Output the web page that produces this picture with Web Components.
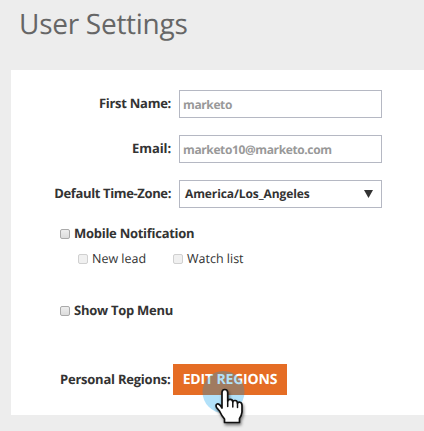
<!DOCTYPE html>
<html lang="en"><head><meta charset="utf-8"><title>User Settings</title>
<style>
html,body{margin:0;height:431px;overflow:hidden;background:#ededed}
body{font-family:"Open Sans","Noto Sans",sans-serif;font-size:13px;color:#333;text-rendering:geometricPrecision}
</style></head><body>
<settings-page heading="User Settings">
  <field-row label="First Name:" style="--track:-.27px"><text-box value="marketo"></text-box></field-row>
  <field-row label="Email:" style="--track:-.1px"><text-box value="marketo10@marketo.com"></text-box></field-row>
  <field-row label="Default Time-Zone:" style="--track:-.37px"><select-box value="America/Los_Angeles"></select-box></field-row>
  <check-group>
    <check-item strong>Mobile Notification</check-item>
    <div slot="children"><check-item muted>New lead</check-item></div>
    <div slot="children"><check-item muted>Watch list</check-item></div>
  </check-group>
  <check-group><check-item strong>Show Top Menu</check-item></check-group>
  <region-row label="Personal Regions:"><action-button>EDIT REGIONS</action-button></region-row>
</settings-page>
<click-pointer></click-pointer>
<script>
class Base extends HTMLElement{
  connectedCallback(){
    if(this.shadowRoot)return;
    this.attachShadow({mode:'open'}).innerHTML=this.render();
  }
  a(n){return this.getAttribute(n)||''}
}
customElements.define('settings-page',class extends Base{render(){return `
<style>
:host{display:flex;flex-direction:column;height:431px}
h1{margin:0;height:70px;box-sizing:border-box;padding:5px 0 0 19px;font-size:28px;line-height:38px;font-weight:400;letter-spacing:-.27px;color:#666;white-space:nowrap}
section{margin-left:11px;height:345px;box-sizing:border-box;padding-top:20px;background:#fff}
</style><h1>${this.a('heading')}</h1><section><slot></slot></section>`}});
customElements.define('field-row',class extends Base{render(){return `
<style>
:host{display:grid;grid-template-columns:160px 203px;column-gap:8px;height:28px;margin-bottom:17px}
label{text-align:right;font-weight:700;line-height:27px;letter-spacing:var(--track,0);white-space:nowrap}
</style><label>${this.a('label')}</label><slot></slot>`}});
const boxCss=`:host{display:flex;box-sizing:border-box;height:28px;border:1px solid #b5b8c3;background:#fff;line-height:28px;font-weight:700;font-size:12px;white-space:nowrap}`;
customElements.define('text-box',class extends Base{render(){return `
<style>${boxCss} :host{padding-left:3px;color:#999;letter-spacing:-.38px}</style><span>${this.a('value')}</span>`}});
customElements.define('select-box',class extends Base{render(){return `
<style>${boxCss} :host{padding:0 8px 0 5px;justify-content:space-between;align-items:center;color:#333;letter-spacing:-.1px}</style>
<span>${this.a('value')}</span><svg width="9" height="8" viewBox="0 0 9 8"><path d="M0 0h9L4.500 8z" fill="#333"/></svg>`}});
customElements.define('check-item',class extends Base{render(){return `
<style>
:host{display:flex;align-items:center;gap:4px;height:18px;line-height:18px;white-space:nowrap}
:host([strong]){font-weight:700;letter-spacing:-.27px}
i{box-sizing:border-box;width:10px;height:10px;border:1px solid #aaa;border-radius:2px;background:linear-gradient(#eee,#dcdcdc)}
:host([strong]) i{margin-top:1px}
:host([muted]) i{border-color:#d0d0d0;background:#f0f0f0}
:host([muted]){font-size:12.500px}
</style><i></i><span><slot></slot></span>`}});
customElements.define('check-group',class extends Base{render(){return `
<style>
:host{display:block;height:77px;margin-left:49px;position:relative;top:-1px}
.sub{display:grid;grid-template-columns:95px auto;padding:8px 0 0 18px}
</style><slot></slot><div class="sub"><slot name="children"></slot></div>`}});
customElements.define('region-row',class extends Base{render(){return `
<style>
:host{display:flex;gap:4px;height:31px;padding-left:49px;margin-top:-15px}
label{font-weight:700;white-space:nowrap;width:109px;line-height:31px;letter-spacing:-.23px}
</style><label>${this.a('label')}</label><slot></slot>`}});
customElements.define('action-button',class extends Base{render(){return `
<style>
:host{display:block;box-sizing:border-box;width:114px;height:31px;background:#e56d25;color:#fff;text-align:center;font-weight:700;font-size:14px;line-height:32px;letter-spacing:-.17px;white-space:nowrap}
</style><slot></slot>`}});
customElements.define('click-pointer',class extends Base{render(){return `
<style>
:host{position:absolute;left:202px;top:371px;width:44px;height:56px}
svg{display:block;overflow:visible}
.hand{filter:drop-shadow(1px 2px 1.500px rgba(0,0,0,.5))}
</style><svg width="44" height="56" viewBox="0 0 44 56">
<circle cx="21.500" cy="21" r="21" fill="rgb(0,155,235)" fill-opacity=".3"/>
<path class="hand" d="M20 37V21.500Q20 18.500 22.800 18.500T25.700 21.500V30Q26 28.300 28.300 28.300T30.800 31Q31 29.300 33.200 29.500T35.500 32.300Q36 30.700 38 31.200T40 34.500V41Q39.500 45 37.500 47.500V51.500H22.500V48Q19.500 44.500 17.500 40L14.500 36.500Q13.300 33.800 15.200 33Q17.300 32.500 20 37Z" fill="#fff" stroke="#111" stroke-width="1.700" stroke-linejoin="round"/>
<path d="M25.700 30V35.500M30.800 31V36M35.500 32V36.500" stroke="#111" stroke-width="1.500" stroke-linecap="round"/>
</svg>`}});
</script></body></html>
